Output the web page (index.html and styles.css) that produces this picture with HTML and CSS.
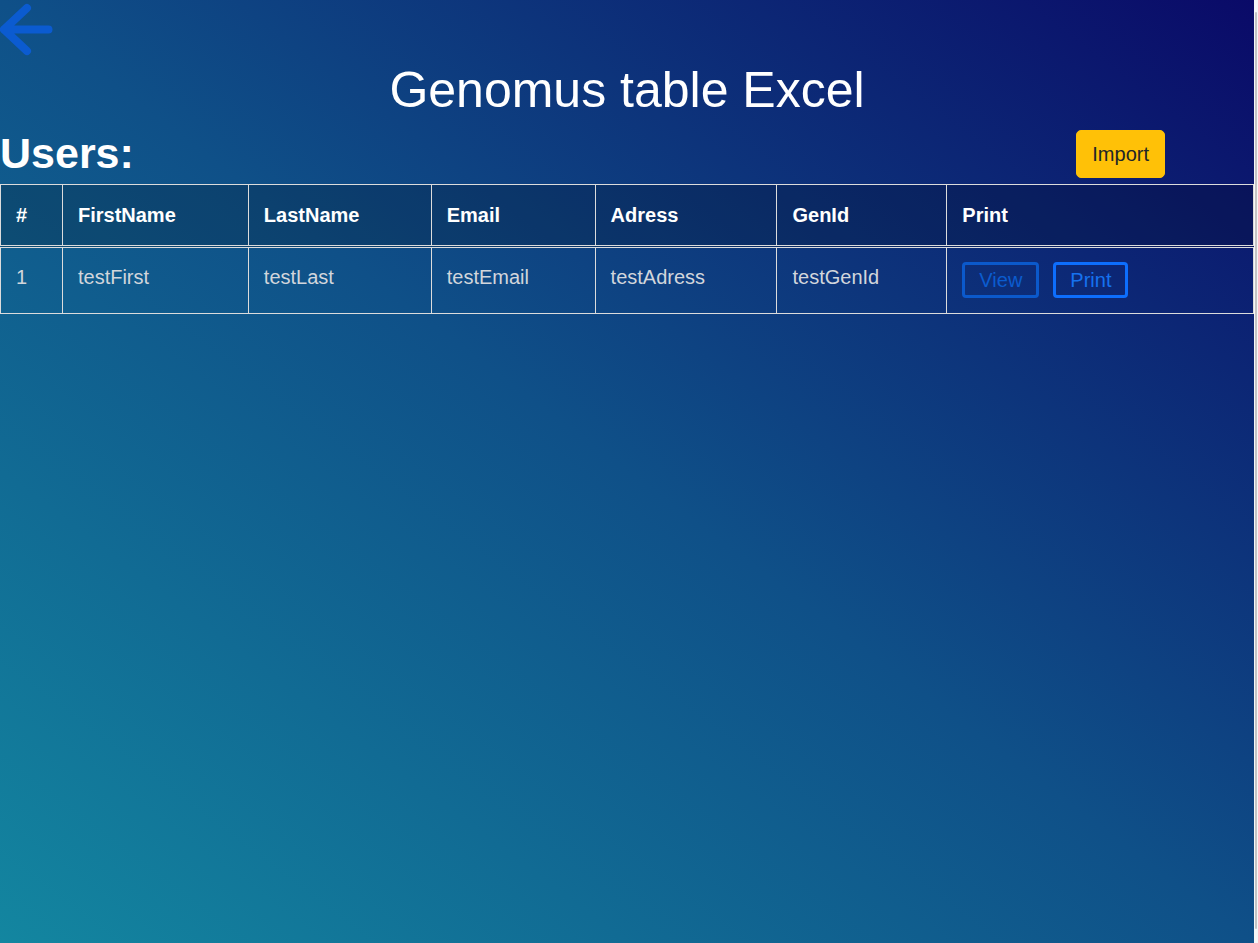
FILE: index.html
```html
<!DOCTYPE html>
<html lang="en">
<head>
<meta charset="utf-8">
<title>Genomus table Excel</title>
<link rel="stylesheet" href="styles.css">
</head>
<body>
<div class="shell">
<main class="page">
  <a class="back" href="#" aria-label="Back">
    <svg width="56" height="56" viewBox="0 0 56 56" fill="none" stroke="#0b5bd0" stroke-width="8" stroke-linecap="round" stroke-linejoin="round">
      <path d="M27 8 L4 29.5 L27 51 M4 29.5 H48.5"/>
    </svg>
  </a>
  <h1 class="title">Genomus table Excel</h1>
  <div class="users-bar">
    <h2 class="users-heading">Users:</h2>
    <button class="btn-import" type="button">Import</button>
  </div>
  <table class="users-table">
    <colgroup>
      <col class="c-num"><col class="c-first"><col class="c-last"><col class="c-email"><col class="c-adr"><col class="c-gen"><col class="c-print">
    </colgroup>
    <thead>
      <tr>
        <th>#</th><th>FirstName</th><th>LastName</th><th>Email</th><th>Adress</th><th>GenId</th><th>Print</th>
      </tr>
    </thead>
    <tbody>
      <tr>
        <td>1</td><td>testFirst</td><td>testLast</td><td>testEmail</td><td>testAdress</td><td>testGenId</td>
        <td><button class="btn-outline btn-view" type="button">View</button><button class="btn-outline btn-print" type="button">Print</button></td>
      </tr>
    </tbody>
  </table>
</main>
<div class="scrollbar" aria-hidden="true"><div class="scrollbar-thumb"></div></div>
</div>
</body>
</html>
```
FILE: styles.css
```css
html,
body {
  margin: 0;
  height: 100%;
}
body {
  font-family: "Liberation Sans", Arial, sans-serif;
  color: #fff;
  background: #f6f6f6;
  overflow: hidden;
}
.shell {
  display: flex;
  height: 100%;
}
.page {
  flex: 1;
  display: flex;
  flex-direction: column;
  min-width: 0;
  background: linear-gradient(to top right, #1386a0 0%, #0f5088 50%, #0a0a68 100%);
}
.scrollbar {
  flex: 0 0 4px;
  display: flex;
  flex-direction: column;
  padding: 12px 0 14px;
  background: #f6f6f6;
  box-sizing: border-box;
}
.scrollbar-thumb {
  flex: 1;
  margin-left: 1px;
  width: 2px;
  background: #c4c4c4;
  border-radius: 1px;
}
.back {
  display: block;
  width: 56px;
  height: 56px;
}
.back svg {
  display: block;
}
.title {
  margin: 5px 0 0;
  font-size: 50px;
  font-weight: 400;
  line-height: normal;
  text-align: center;
}
.users-bar {
  display: flex;
  justify-content: space-between;
  align-items: center;
  margin-top: 10px;
}
.users-heading {
  margin: 0;
  font-size: 43px;
  font-weight: 700;
  line-height: normal;
}
.btn-import {
  margin-right: 89px;
  padding: 8px 15px;
  font-family: inherit;
  font-size: 20px;
  line-height: 30px;
  color: #212529;
  background: #ffc107;
  border: 1px solid #ffc107;
  border-radius: 5px;
}
.users-table {
  margin-top: 6px;
  width: 100%;
  border-collapse: collapse;
  font-size: 20px;
  line-height: 30px;
}
.c-num { width: 62px; }
.c-first { width: 186px; }
.c-last { width: 183px; }
.c-email { width: 164px; }
.c-adr { width: 182px; }
.c-gen { width: 170px; }
.c-print { width: 307px; }
.users-table th,
.users-table td {
  border: 1px solid #dcdcdc;
  text-align: left;
  vertical-align: top;
}
.users-table th {
  padding: 15px 15px;
  font-weight: 700;
  color: #fff;
  background: rgba(0, 0, 0, 0.18);
  border-bottom: 3px double #dcdcdc;
}
.users-table td {
  padding: 14px 15px 15px;
  color: #d2d6dc;
}
.btn-outline {
  display: inline-block;
  padding: 0 14px;
  margin: 0 14px 0 0;
  font-family: inherit;
  font-size: 20px;
  line-height: 30px;
  background: transparent;
  border: 3px solid #0d6efd;
  border-radius: 4px;
  vertical-align: baseline;
}
.btn-view {
  color: #0b5ccf;
  border-color: #0b59cb;
}
.btn-print {
  color: #1672ef;
  border-color: #0d6efd;
}
```
